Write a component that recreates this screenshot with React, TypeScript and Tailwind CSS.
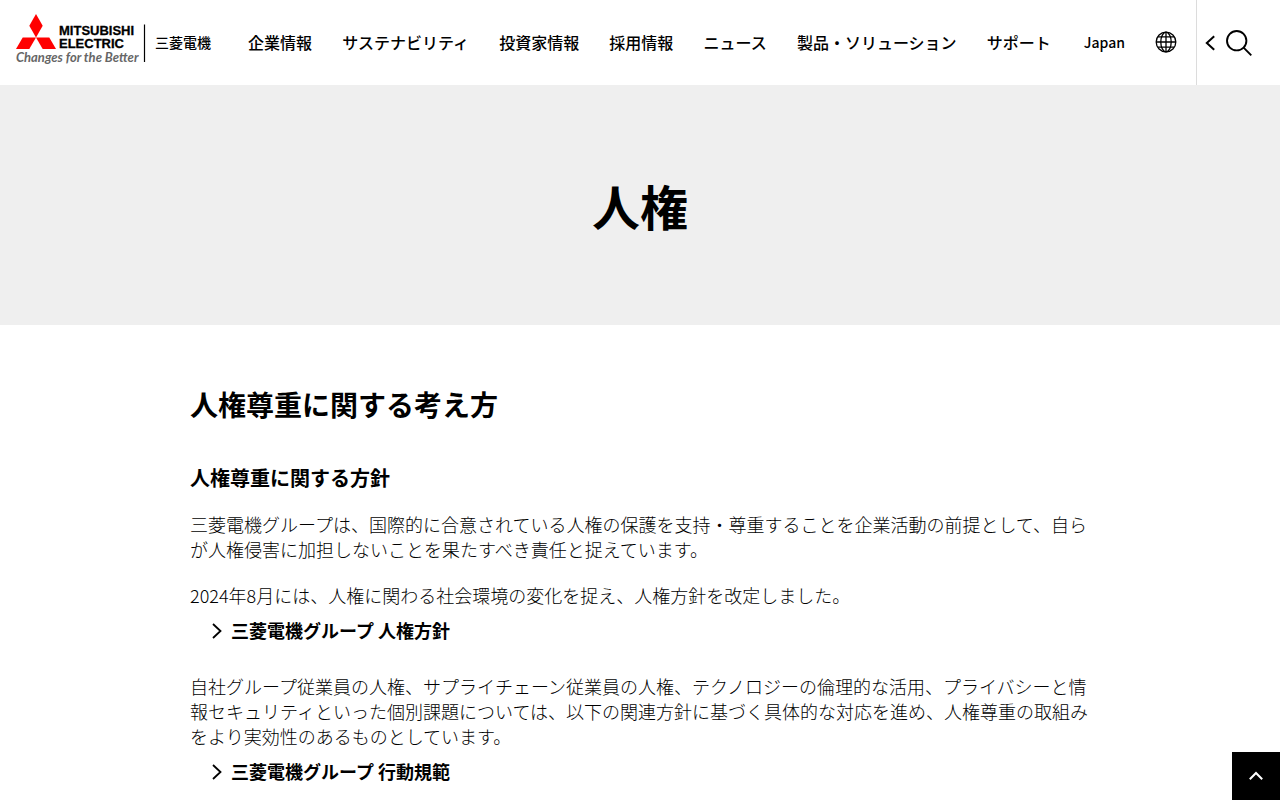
import React from 'react';

interface NavItem {
  label: string;
  href: string;
}

const NAV_ITEMS: NavItem[] = [
  { label: '企業情報', href: '#corporate' },
  { label: 'サステナビリティ', href: '#sustainability' },
  { label: '投資家情報', href: '#ir' },
  { label: '採用情報', href: '#recruit' },
  { label: 'ニュース', href: '#news' },
  { label: '製品・ソリューション', href: '#products' },
  { label: 'サポート', href: '#support' },
];

const Logo: React.FC = () => (
  <svg viewBox="0 0 200 56" className="w-[200px] h-14 shrink-0" role="img" aria-label="三菱電機 Changes for the Better">
    <g fill="#ff0000">
      <path d="M20 0 26.7 11.7 20 23.4 13.3 11.7Z" />
      <path d="M20 23.4 13.3 35H0L6.7 23.4Z" />
      <path d="M20 23.4H33.3L40 35H26.7Z" />
    </g>
    <g fill="#000" stroke="#000" strokeWidth="0.3" fontFamily="'Liberation Sans', Arial, sans-serif" fontWeight="700" fontSize="13">
      <text x="43" y="21">MITSUBISHI</text>
      <text x="43" y="34">ELECTRIC</text>
    </g>
    <text x="0" y="48" fill="#666" fontFamily="Lato, sans-serif" fontStyle="italic" fontWeight="700" fontSize="13">
      Changes for the Better
    </text>
    <path d="M128.5 10.5V48" stroke="#000" strokeWidth="1.2" />
    <text x="139" y="34" fill="#000" fontFamily="'Noto Sans CJK JP', sans-serif" fontWeight="500" fontSize="14">
      三菱電機
    </text>
  </svg>
);

const GlobeIcon: React.FC = () => (
  <svg viewBox="0 0 22 22" className="w-[22px] h-[22px]" fill="none" stroke="#000" strokeWidth="1.3">
    <circle cx="11" cy="11" r="9.8" />
    <ellipse cx="11" cy="11" rx="5.2" ry="9.8" />
    <path d="M11 1.2V20.8M1.2 11H20.8M2.8 5.8H19.2M2.8 16.2H19.2" />
  </svg>
);

const SearchIcon: React.FC = () => (
  <svg viewBox="0 0 26 26" className="w-[26px] h-[26px]" fill="none" stroke="#000" strokeWidth="1.9">
    <circle cx="10.7" cy="10.7" r="9.7" />
    <path d="M17.6 17.6 25.3 25.3" />
  </svg>
);

const Header: React.FC = () => (
  <header className="flex h-[85px] bg-white">
    <div className="flex flex-1 items-center pb-0.5 pl-4">
      <a href="#top">
        <Logo />
      </a>
      <nav className="ml-8 flex-1">
        <ul className="flex justify-between text-base font-medium whitespace-nowrap">
          {NAV_ITEMS.map((item) => (
            <li key={item.href}>
              <a href={item.href}>{item.label}</a>
            </li>
          ))}
        </ul>
      </nav>
      <a href="#japan" className="ml-[33px] text-sm font-medium">Japan</a>
      <button type="button" aria-label="Language" className="ml-[30px] mr-[19px] cursor-pointer">
        <GlobeIcon />
      </button>
    </div>
    <div className="flex w-[84px] items-center gap-2.5 border-l border-[#dcdcdc] pl-2">
      <button type="button" aria-label="メニューを開く" className="cursor-pointer">
        <svg viewBox="0 0 11 16" className="w-[11px] h-4" fill="none" stroke="#000" strokeWidth="2">
          <path d="M9.2 1.2 1.8 8 9.2 14.8" />
        </svg>
      </button>
      <button type="button" aria-label="検索" className="cursor-pointer">
        <SearchIcon />
      </button>
    </div>
  </header>
);

const ArrowLink: React.FC<{ href: string; children: React.ReactNode }> = ({ href, children }) => (
  <a href={href} className="mt-2.5 ml-5 flex items-center gap-2 text-lg leading-[25px] font-bold">
    <svg viewBox="0 0 13 16" className="w-[13px] h-4" fill="none" stroke="#000" strokeWidth="1.8">
      <path d="M3 1 10.5 8 3 15" />
    </svg>
    {children}
  </a>
);

export default function App() {
  return (
    <div id="top" lang="ja" className="min-h-screen bg-white text-black font-['Noto_Sans_CJK_JP',sans-serif]">
      <Header />

      {/* Page title */}
      <div className="flex h-60 items-center justify-center bg-[#efefef]">
        <h1 className="text-5xl font-bold">人権</h1>
      </div>

      <main className="mx-auto max-w-[900px] pt-[59px] text-lg leading-[25px] font-light">
        <h2 className="text-[28px] leading-10 font-bold">人権尊重に関する考え方</h2>
        <h3 className="mt-10 text-xl leading-7 font-bold">人権尊重に関する方針</h3>

        <p className="mt-5">
          三菱電機グループは、国際的に合意されている人権の保護を支持・尊重することを企業活動の前提として、自らが人権侵害に加担しないことを果たすべき責任と捉えています。
        </p>
        <p className="mt-[21px]">2024年8月には、人権に関わる社会環境の変化を捉え、人権方針を改定しました。</p>
        <ArrowLink href="#policy">三菱電機グループ 人権方針</ArrowLink>

        <p className="mt-[31px]">
          自社グループ従業員の人権、サプライチェーン従業員の人権、テクノロジーの倫理的な活用、プライバシーと情報セキュリティといった個別課題については、以下の関連方針に基づく具体的な対応を進め、人権尊重の取組みをより実効性のあるものとしています。
        </p>
        <ArrowLink href="#conduct">三菱電機グループ 行動規範</ArrowLink>
      </main>

      {/* Back to top */}
      <a href="#top" aria-label="ページトップへ" className="fixed right-0 bottom-0 flex size-12 items-center justify-center bg-black">
        <svg viewBox="0 0 14 10" className="w-3.5 h-2.5" fill="none" stroke="#fff" strokeWidth="2">
          <path d="M0.8 8.2 7 2 13.2 8.2" />
        </svg>
      </a>
    </div>
  );
}
